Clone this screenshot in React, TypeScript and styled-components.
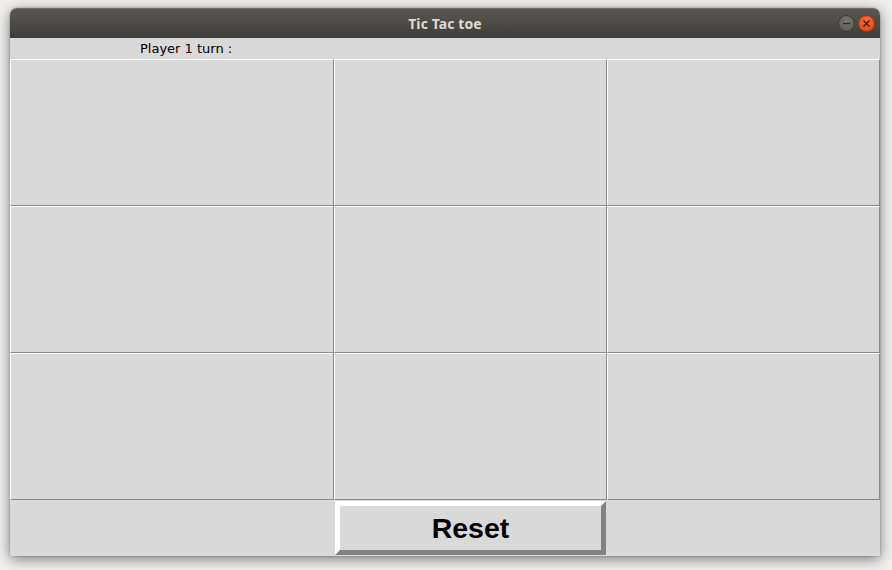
import React from "react";
import styled, { createGlobalStyle } from "styled-components";

const GlobalStyle = createGlobalStyle`
  html, body {
    margin: 0;
    padding: 0;
    background: #f1f0ef;
    overflow: hidden;
  }
`;

const Page = styled.div`
  width: 892px;
  height: 570px;
  box-sizing: border-box;
  padding: 8px 12px 0 10px;
`;

const Window = styled.div`
  width: 870px;
  display: flex;
  flex-direction: column;
  border-radius: 7px 7px 0 0;
  box-shadow: 0 3px 14px rgba(0, 0, 0, 0.5), 0 0 2px rgba(0, 0, 0, 0.3);
  background: #d9d9d9;
`;

const TitleBar = styled.div`
  height: 30px;
  display: grid;
  grid-template-columns: 1fr auto 1fr;
  align-items: center;
  border-radius: 7px 7px 0 0;
  background: linear-gradient(#5b5852 0%, #4a4843 60%, #3e3c38 100%);
  box-shadow: inset 0 1px 0 rgba(255, 255, 255, 0.12);
`;

const Title = styled.div`
  grid-column: 2;
  font-family: "Noto Sans", "DejaVu Sans", sans-serif;
  font-weight: 700;
  font-size: 14px;
  color: #dfdbd2;
  letter-spacing: 0.1px;
`;

const Controls = styled.div`
  grid-column: 3;
  justify-self: end;
  display: flex;
  gap: 3px;
  padding-right: 5px;
`;

const Circle = styled.div<{ $close?: boolean }>`
  width: 17px;
  height: 17px;
  border-radius: 50%;
  box-sizing: border-box;
  border: 1px solid ${(p) => (p.$close ? "#a13612" : "#3a3935")};
  background: ${(p) =>
    p.$close
      ? "radial-gradient(circle at 50% 35%, #f46c39, #e2521d 70%)"
      : "radial-gradient(circle at 50% 35%, #7a7976, #5e5d59 70%)"};
  display: flex;
  align-items: center;
  justify-content: center;
`;

const Content = styled.div`
  display: flex;
  flex-direction: column;
  background: #d9d9d9;
`;

const LabelRow = styled.div`
  height: 21px;
  display: flex;
  align-items: center;
  padding-left: 130px;
  font-family: "DejaVu Sans", sans-serif;
  font-size: 13px;
  color: #000;
`;

const Board = styled.div`
  display: grid;
  grid-template-columns: 324px 273px 273px;
  grid-template-rows: repeat(3, 147px) 56px;
`;

const Cell = styled.div`
  box-sizing: border-box;
  background: #d9d9d9;
  border-top: 1px solid #ffffff;
  border-left: 1px solid #ffffff;
  border-right: 1px solid #898989;
  border-bottom: 1px solid #898989;
`;

const Filler = styled.div`
  background: #d9d9d9;
`;

const ResetButton = styled.button`
  margin: 1px;
  box-sizing: border-box;
  background: #d9d9d9;
  border-style: solid;
  border-width: 5px;
  border-color: #ffffff #828282 #828282 #ffffff;
  font-family: "Liberation Sans", Arial, sans-serif;
  font-weight: 700;
  font-size: 28.5px;
  color: #000;
  padding: 0;
  cursor: pointer;
`;

export default function App() {
  return (
    <>
      <GlobalStyle />
      <Page>
        <Window>
          <TitleBar>
            <Title>Tic Tac toe</Title>
            <Controls>
              <Circle>
                <svg width="9" height="9" viewBox="0 0 9 9">
                  <line x1="1" y1="4.5" x2="8" y2="4.5" stroke="#2f2e2b" strokeWidth="1.3" />
                </svg>
              </Circle>
              <Circle $close>
                <svg width="9" height="9" viewBox="0 0 9 9">
                  <line x1="1.5" y1="1.5" x2="7.5" y2="7.5" stroke="#3a1708" strokeWidth="1.3" />
                  <line x1="7.5" y1="1.5" x2="1.5" y2="7.5" stroke="#3a1708" strokeWidth="1.3" />
                </svg>
              </Circle>
            </Controls>
          </TitleBar>
          <Content>
            <LabelRow>Player 1 turn :</LabelRow>
            <Board>
              {Array.from({ length: 9 }).map((_, i) => (
                <Cell key={i} />
              ))}
              <Filler />
              <ResetButton>Reset</ResetButton>
              <Filler />
            </Board>
          </Content>
        </Window>
      </Page>
    </>
  );
}
